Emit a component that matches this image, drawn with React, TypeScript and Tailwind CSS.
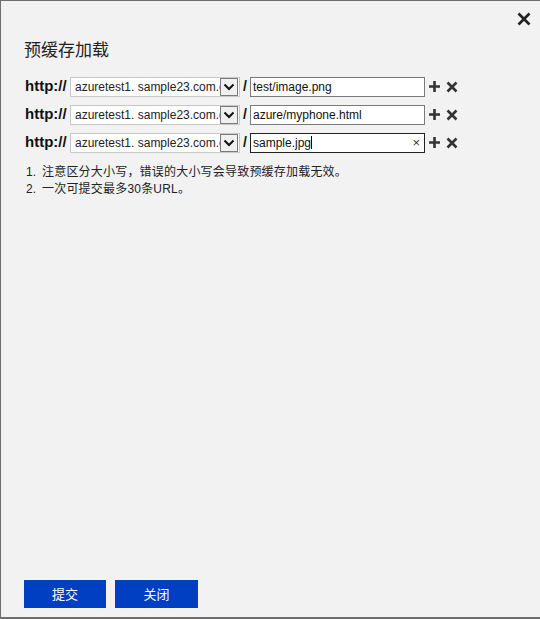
import React from 'react';

const rows = [
  { path: 'test/image.png', focused: false },
  { path: 'azure/myphone.html', focused: false },
  { path: 'sample.jpg', focused: true },
];

function Chevron() {
  return (
    <svg width="12" height="8" viewBox="0 0 12 8" fill="none">
      <path d="M1.5 1.5 L6 6 L10.5 1.5" stroke="#111" strokeWidth="2" />
    </svg>
  );
}

function PlusIcon() {
  return (
    <svg width="13" height="13" viewBox="0 0 13 13">
      <path d="M6.5 1 V12 M1 6.5 H12" stroke="#333" strokeWidth="2.6" />
    </svg>
  );
}

function CrossIcon({ size = 12 }: { size?: number }) {
  return (
    <svg width={size} height={size} viewBox="0 0 12 12">
      <path d="M1.5 1.5 L10.5 10.5 M10.5 1.5 L1.5 10.5" stroke="#333" strokeWidth="2.6" />
    </svg>
  );
}

function UrlRow({ path, focused }: { path: string; focused: boolean }) {
  return (
    <div className="flex h-[19px] items-center">
      <span className="w-[45px] text-[15px] font-bold text-[#111] [font-family:Arial,'Liberation_Sans',sans-serif]">
        http://
      </span>
      {/* host select */}
      <div className="flex h-[20px] w-[170px] items-center border border-[#c8c8c8] bg-white">
        <span className="flex-1 overflow-hidden whitespace-nowrap pl-[4px] text-[12px] text-[#222] [font-family:Arial,'Liberation_Sans',sans-serif]">
          azuretest1. sample23.com.cn
        </span>
        <div className="mr-px flex h-[18px] w-[18px] items-center justify-center border border-[#7a7a7a] bg-[#f0f0f0]">
          <Chevron />
        </div>
      </div>
      <span className="w-[10px] text-center text-[14px] font-bold text-[#111] [font-family:Arial,sans-serif]">/</span>
      <div
        className={`flex h-[20px] w-[175px] items-center border bg-white ${
          focused ? 'border-[#222]' : 'border-[#7a7a7a]'
        }`}
      >
        <span className="flex-1 pl-[2px] text-[12px] text-[#111] [font-family:Arial,'Liberation_Sans',sans-serif]">
          {path}
          {focused && <span className="inline-block h-[13px] w-px translate-y-[2px] bg-black" />}
        </span>
        {focused && <span className="pr-[4px] text-[13px] leading-none text-[#333] [font-family:Arial,sans-serif]">×</span>}
      </div>
      <div className="ml-[3px] flex items-center gap-[5px]">
        <PlusIcon />
        <CrossIcon />
      </div>
    </div>
  );
}

export default function App() {
  return (
    <div className="flex h-[619px] w-[540px] flex-col border-b-2 border-l border-t border-[#6e6e6e] bg-[#f2f2f2] [font-family:Arial,'Noto_Sans_CJK_SC',sans-serif]">
      <div className="flex justify-end pr-[9px] pt-[11px]">
        <svg width="14" height="14" viewBox="0 0 14 14">
          <path d="M1.5 1.5 L12.5 12.5 M12.5 1.5 L1.5 12.5" stroke="#222" strokeWidth="2.6" />
        </svg>
      </div>
      <h1 className="ml-[23px] mt-[11px] text-[17px] font-normal leading-[24px] text-[#222] [font-family:'Noto_Sans_CJK_SC',sans-serif]">
        预缓存加载
      </h1>
      <div className="ml-[24px] mt-[16px] flex flex-col gap-[9px]">
        {rows.map((r) => (
          <UrlRow key={r.path} path={r.path} focused={r.focused} />
        ))}
      </div>
      <ol className="ml-[25px] mt-[12px] text-[12px] leading-[17px] text-[#222] [font-family:Arial,'Noto_Sans_CJK_SC',sans-serif]">
        <li className="flex">
          <span className="w-[16px]">1.</span>
          <span className="tracking-[0.2px]">注意区分大小写，错误的大小写会导致预缓存加载无效。</span>
        </li>
        <li className="flex">
          <span className="w-[16px]">2.</span>
          <span className="tracking-[0.2px]">一次可提交最多30条URL。</span>
        </li>
      </ol>
      <div className="mt-auto mb-[9px] ml-[23px] flex gap-[9px]">
        <button className="h-[28px] w-[82px] bg-[#003fc1] text-[13px] text-white [font-family:'Noto_Sans_CJK_SC',sans-serif]">
          提交
        </button>
        <button className="h-[28px] w-[83px] bg-[#003fc1] text-[13px] text-white [font-family:'Noto_Sans_CJK_SC',sans-serif]">
          关闭
        </button>
      </div>
    </div>
  );
}
